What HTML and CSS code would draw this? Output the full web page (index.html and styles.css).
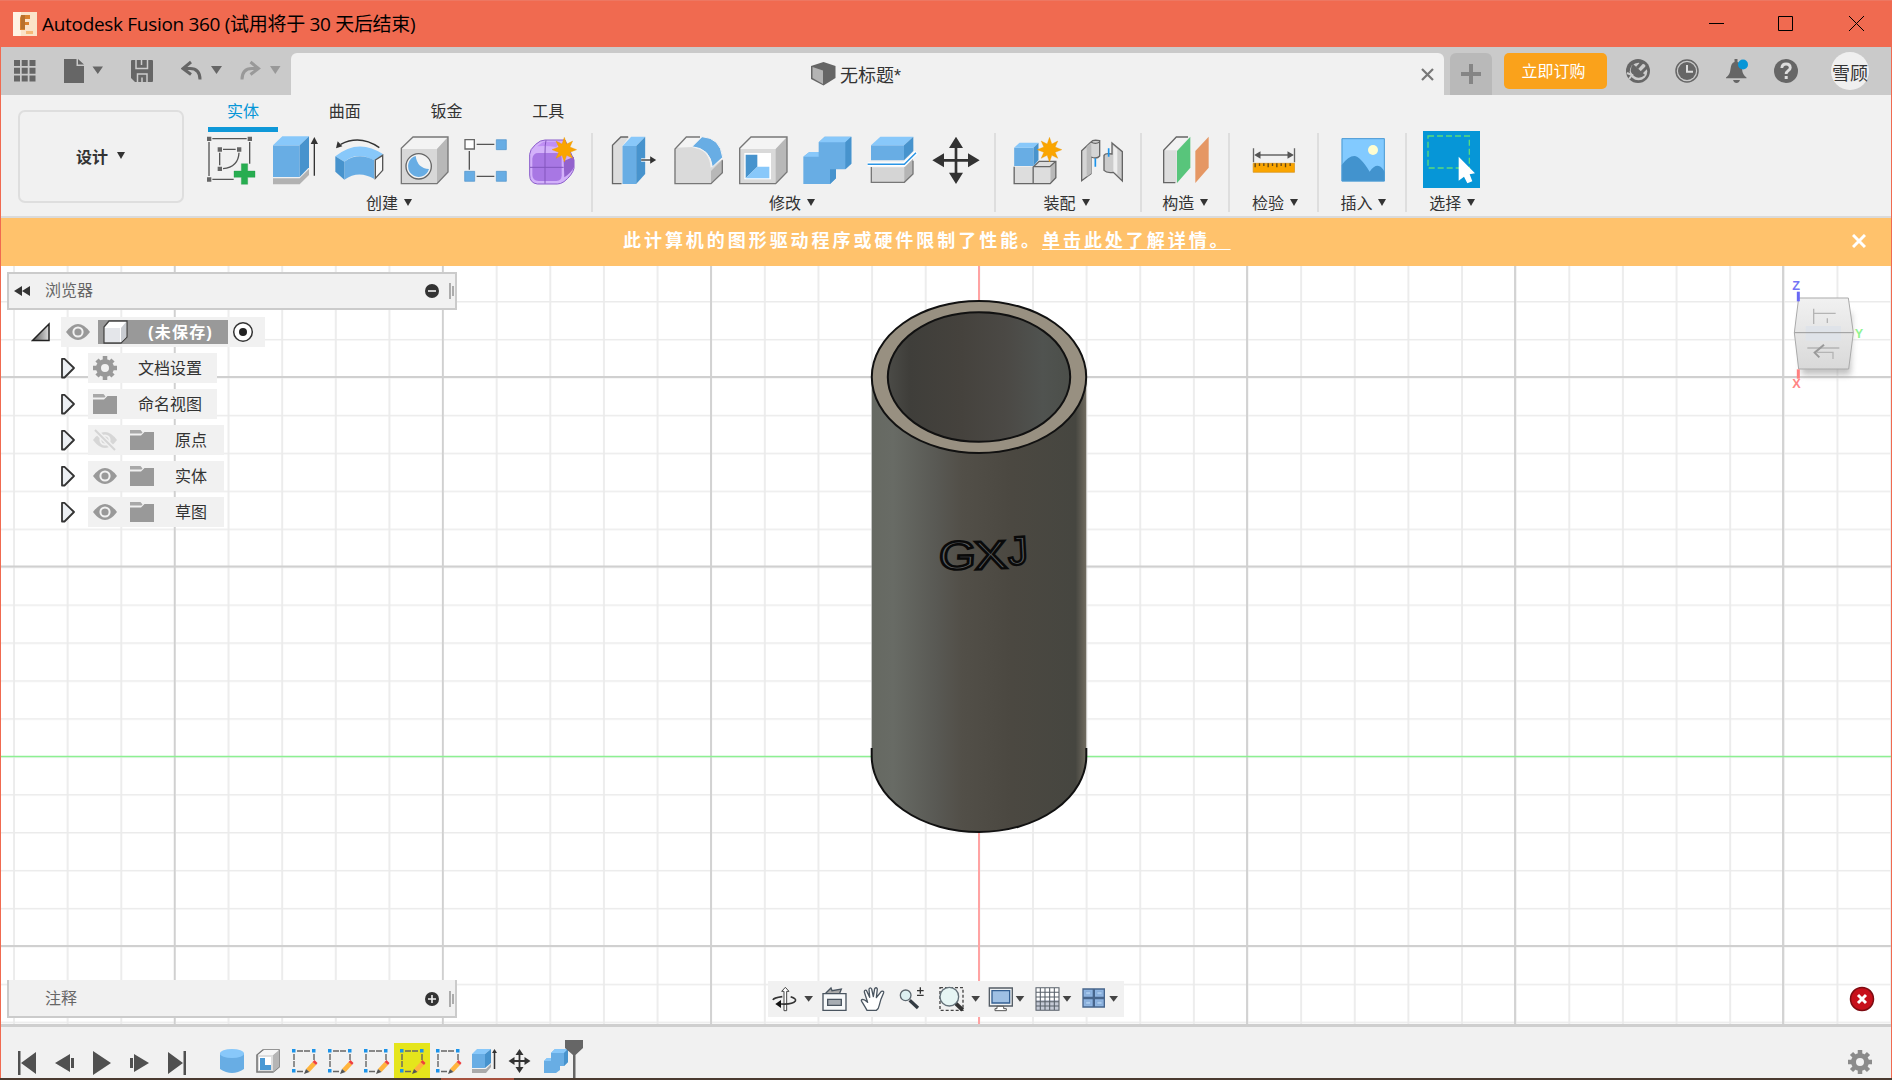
FILE: index.html
```html
<!DOCTYPE html>
<html lang="zh-CN">
<head>
<meta charset="utf-8">
<title>Autodesk Fusion 360</title>
<link rel="stylesheet" href="styles.css">
</head>
<body>
<svg class="defs" width="0" height="0">
  <defs>
    <linearGradient id="tri" x1="0" x2="1"><stop offset="0" stop-color="#555"/><stop offset="1" stop-color="#ddd"/></linearGradient>
    <symbol id="eye" viewBox="0 0 24 24"><path d="M0 12Q12-4 24 12Q12 28 0 12Z" fill="#999"/><circle cx="12" cy="12" r="4.600" fill="none" stroke="#f1f1f1" stroke-width="2"/></symbol>
    <symbol id="folder" viewBox="0 0 24 24"><path d="M0 4.500V2h10.500l2 2.500-1 1H0Z" fill="#a8a8a8"/><path d="M0 22V7.500h11l3.500-3.500H24v18Z" fill="#999"/></symbol>
    <symbol id="expand" viewBox="0 0 16 24"><path d="M2 2.800H4.500L14 12 4.500 21.500H2Z" fill="#eceff3" stroke="#333" stroke-width="1.800" stroke-linejoin="round"/></symbol>
    <symbol id="star" viewBox="-38 -38 76 76"><path d="M0-37 7-17 25-26 17-8 37 0 17 8 25 26 7 17 0 37-7 17-25 26-17 8-37 0-17-8-25-26-7-17Z" fill="#faa500" stroke="#eb9500"/></symbol>
    <symbol id="sk" viewBox="0 0 36 36"><g stroke="#666" stroke-width="1.400" fill="none"><path d="M11 8h13M8 11v14M11 28.500h6M28 11v7" stroke-dasharray="6 1"/></g><path d="M6 6h3.500v3.500H6zM26 6h3.500v3.500H26zM6 26h3.500v3.500H6z" fill="#1b93ea"/><path d="M20 26 26.500 19 30 22 23.500 29Z" fill="#ffb43d"/><path d="M26.500 19 28.500 17 31.500 20 30 22Z" fill="#ee3e3e"/><path d="M20 26 23.500 29 18 31Z" fill="#555"/></symbol>
  </defs>
</svg>
<div class="app">
  <header class="titlebar">
    <svg class="logo" width="24" height="24"><rect width="24" height="24" fill="#fbe3c9"/><path d="M0 0h8v24H0Z" fill="#fff3e4"/><path d="M8 3h9v4h-5v3h4v3h-4v5H7V6Z" fill="#d9812c"/><path d="M8 3h4v14H8z" fill="#b8712c"/><path d="M13 19h7v3h-7z" fill="#f6b877"/></svg>
    <span class="apptitle">Autodesk Fusion 360 (试用将于 30 天后结束)</span>
    <svg class="winbtns" width="155" height="15" fill="none" stroke="#000"><path d="M0 7.500h15M69.500.5h14v14h-14zM140 0l15 15M155 0l-15 15"/></svg>
  </header>

  <div class="tabstrip">
    <div class="quick">
      <svg width="22" height="22" fill="#666"><path d="M0 0h6v6H0zM7.700 0h6v6h-6zM15.500 0h6v6h-6zM0 7.700h6v6H0zM7.700 7.700h6v6h-6zM15.500 7.700h6v6h-6zM0 15.500h6v6H0zM7.700 15.500h6v6h-6zM15.500 15.500h6v6h-6z"/></svg>
      <svg class="q-file" width="40" height="24" fill="#666"><path d="M0 0h12.500v7H20v17H0zM14 0l6 5.500h-6zM28.500 7.500h10.500l-5.200 7.500z"/></svg>
      <svg class="q-save" width="22" height="22"><path d="M1 0h20q1 0 1 1v20q0 1-1 1H4L0 18V1Q0 0 1 0Z" fill="#666"/><path d="M5 0v8.500h11.500V0M10.500 0v5M6.500 22v-8h9.500v8M11 22v-4.500" fill="none" stroke="#ccc" stroke-width="1.500"/></svg>
      <svg class="q-undo" width="42" height="22"><path d="M10 2 2 8.500l8 6M3 8.500h6q10 0 10 11" fill="none" stroke="#666" stroke-width="3"/><path d="M30 6h11l-5.500 8z" fill="#666"/></svg>
      <svg class="q-redo" width="42" height="22"><path d="M10.500 2l8 6.500-8 6M18 8.500h-6Q2 8.500 2 19.500" fill="none" stroke="#999" stroke-width="3"/><path d="M30 6h10.500l-5.200 8z" fill="#999"/></svg>
    </div>
    <div class="doctab">
      <svg width="25" height="24"><path d="M0 4 12.500 0 24.500 4V16L12.500 23.500 0 17Z" fill="#666"/><path d="M1.500 5 12 8.500V22L1.500 16Z" fill="#b4b4b4"/></svg>
      <span>无标题*</span>
      <svg class="close" width="13" height="13"><path d="M1 1l11 11M12 1L1 12" stroke="#777" stroke-width="2.200"/></svg>
    </div>
    <div class="newtab"><svg width="20" height="20"><path d="M10 0v20M0 10h20" stroke="#858585" stroke-width="4"/></svg></div>
    <button class="order">立即订购</button>
    <div class="account">
      <svg width="24" height="24"><circle cx="12" cy="12" r="12" fill="#666"/><circle cx="12.500" cy="12.500" r="8.800" fill="#ccc"/><path d="M7 5 19 16Q13 21 8 17 2 12 7 5Z" fill="#666"/><path d="M11 9l5.500-6M15.500 13.500l6-6" stroke="#666" stroke-width="3"/><path d="M14.500 10l4-4.500M1 14l5 2-3 4" fill="none" stroke="#ccc" stroke-width="2"/></svg>
      <svg width="24" height="24"><circle cx="12" cy="12" r="11" fill="none" stroke="#666" stroke-width="1.500"/><circle cx="12" cy="12" r="9" fill="#666"/><path d="M12 6v6.700h6" fill="none" stroke="#ddd" stroke-width="2"/></svg>
      <svg width="24" height="24"><path d="M1 18.500Q5 16 5.500 10 6 4 9.500 3V0h3v3q4 1 4.500 7 .5 6 4.500 8.500v.8H1zM8 21h7q-1 3-3.500 3T8 21Z" fill="#666"/><circle cx="18" cy="5.500" r="5" fill="#0696d7"/></svg>
      <svg width="24" height="24"><circle cx="12" cy="12" r="12" fill="#666"/><path d="M7.800 9q.3-4 4.300-4t4.200 3.700c0 3-4.200 3-4.200 6.300" fill="none" stroke="#ddd" stroke-width="2.800"/><path d="M10.700 17h3v3h-3z" fill="#ddd"/></svg>
      <span class="avatar">雪顾</span>
    </div>
  </div>

  <div class="ribbon">
    <div class="workspace">设计<i class="caret"></i></div>
    <nav class="modes"><span class="on">实体</span><span>曲面</span><span>钣金</span><span>工具</span></nav>
    <div class="groups">
      <section class="group g-create"><div class="icons">
        <svg viewBox="38 126 162 162"><path d="M66 143h103M56 153v102M66 265h64M178 153v65M98 175h38M88 185v38M146 185Q144 228 98 233" fill="none" stroke="#555" stroke-width="4"/><path d="M50 137h13v13H50zM172 137h13v13h-13zM50 259h13v13H50zM82 169h13v13H82zM140 169h13v13h-13zM82 227h13v13H82z" fill="#666"/><path d="M153 218h19v22h22v19h-22v21h-19v-21h-22v-19h22z" fill="#27ad50" stroke="#219445"/></svg>
        <svg viewBox="232 126 162 162"><path d="M247 262h80l28-28v18l-28 28h-80z" fill="#b2b2b2"/><path d="M247 163h80v95h-80z" fill="#68ade4"/><path d="M247 163l28-27h80l-28 27z" fill="#88c8fa"/><path d="M327 163l28-27v93l-28 29z" fill="#4793cd"/><path d="M371 254v-96" stroke="#333" stroke-width="4"/><path d="M360 159l11-21 11 21z" fill="#333"/></svg>
        <svg viewBox="426 126 162 162"><path d="M568 170Q510 130 452 160" fill="none" stroke="#333" stroke-width="4"/><path d="M438 172l5-21 14 15z" fill="#333"/><path d="M436 196Q505 140 580 190L553 208Q500 180 463 212Z" fill="#88c8fa"/><path d="M463 212Q505 182 553 208V264Q506 236 463 266Z" fill="#68ade4"/><path d="M436 196l27 16v54l-27-24z" fill="#4793cd"/><path d="M556 207l22-14v45l-22 24z" fill="#f8f8f8" stroke="#555" stroke-width="4"/></svg>
        <svg viewBox="619 126 162 162"><path d="M632 174l35-36h105v105l-33 35H632z" fill="#d8d8d8"/><path d="M632 174l35-36h105l-33 36z" fill="#f3f3f3"/><path d="M739 174l33-36v105l-33 35z" fill="#b8b8b8"/><path d="M632 172l35-34h105v105l-33 35H632z" fill="none" stroke="#777" stroke-width="4"/><circle cx="684" cy="226" r="38" fill="#f3f3f3" stroke="#666" stroke-width="4"/><path d="M675 195Q680 232 715 234A32 32 0 1 1 675 195Z" fill="#68ade4"/></svg>
        <svg viewBox="813 126 162 162"><path d="M838 180v56M860 160h53M860 256h53" stroke="#555" stroke-width="4"/><path d="M825 146h28v28h-28z" fill="#fff" stroke="#666" stroke-width="4"/><path d="M919 146h30v30h-30zM824 241h30v30h-30zM919 241h30v30h-30z" fill="#68ade4" stroke="#4d92ca" stroke-width="2"/></svg>
        <svg viewBox="1007 126 162 162"><path d="M1018 190q0-14 18-30 14-13 28-13h60l27 60v25q-5 20-30 40-10 7-20 7h-60q-23-3-23-27Z" fill="#d3b1fa" stroke="#8b5dcb" stroke-width="3"/><path d="M1040 166l20-14h50l-12 16q-30-4-58-2Z" fill="#c08ff5"/><path d="M1120 210l31-13v30q-5 15-29 32z" fill="#9362cd"/><path d="M1026 203q2-17 18-17h53q17 0 17 17v50q0 17-16 17h-53q-19-1-19-18Z" fill="#a877e4"/><path d="M1019 229h101M1067 148q-3 10-3 38v92" stroke="#8356bd" stroke-width="3" fill="none"/><use href="#star" x="1084" y="138" width="76" height="76"/></svg>
      </div><p>创建<i class="caret"></i></p></section>
      <section class="group g-modify"><div class="icons">
        <svg viewBox="49.5 36 162 162"><path d="M66 73l25-25h24L96 74v114H66z" fill="#ddd"/><path d="M93 188H66V73l25-25h22" fill="none" stroke="#666" stroke-width="4"/><path d="M96 75h41v114H96z" fill="#68ade4"/><path d="M96 75l26-28h42l-27 28z" fill="#88c8fa"/><path d="M137 75l27-28v112l-27 30z" fill="#4793cd"/><path d="M152 117h27" stroke="#fff" stroke-width="10"/><path d="M152 117h30" stroke="#333" stroke-width="4"/><path d="M179 106l18 11-18 11z" fill="#333"/></svg>
        <svg viewBox="243 36 162 162"><path d="M254 84l35-36h50L310 80q48 5 52 60l36-25v40l-34 33H254Z" fill="#dadada"/><path d="M256 80l33-32h48L308 78Z" fill="#f4f4f4"/><path d="M363 150l35-35v40l-35 32Z" fill="#b8b8b8"/><path d="M330 48H289L255 84V188H363L397 155V118" fill="none" stroke="#777" stroke-width="4"/><path d="M306 77l30-30q55 3 62 62L367 138q-6-56-61-61Z" fill="#68ade4" stroke="#f3f3f3" stroke-width="3"/></svg>
        <svg viewBox="437 36 162 162"><path d="M448 84l34-36h108v105l-34 35H448Z" fill="#d9d9d9"/><path d="M448 84l34-36h108l-34 36Z" fill="#f4f4f4"/><path d="M556 84l34-36v105l-34 35Z" fill="#b8b8b8"/><path d="M448 82l34-34h108v105l-34 35H448Z" fill="none" stroke="#777" stroke-width="4"/><path d="M462 96h80v79h-80z" fill="#fff"/><path d="M466 101h35v36l-35 35z" fill="#4793cd"/><path d="M466 172l35-35h36v35z" fill="#88c8fa"/></svg>
        <svg viewBox="631 36 162 162"><path d="M687 64l18-17h80v81l-18 17h-28v27l-18 17h-80v-82l18-14h28z" fill="#68ade4"/><path d="M687 64l18-17h80l-18 17zM641 107l18-14h28v14z" fill="#88c8fa"/><path d="M767 64l18-17v81l-18 17zM721 145h18v27l-18 17z" fill="#4793cd"/></svg>
        <svg viewBox="825 36 162 162"><path d="M844 139h99l26-28v48l-26 25h-99z" fill="#d5d5d5"/><path d="M943 139l26-28v48l-26 25z" fill="#b5b5b5"/><path d="M844 138v46h99l26-25v-40" fill="none" stroke="#777" stroke-width="4"/><path d="M833 130h110l36-36" fill="none" stroke="#fff" stroke-width="13"/><path d="M843 73h99v45h-99z" fill="#68ade4"/><path d="M843 73l28-26h99l-28 26z" fill="#88c8fa"/><path d="M942 73l28-26v43l-28 28z" fill="#4793cd"/><path d="M833 130h110l35-35" fill="none" stroke="#2a95e5" stroke-width="4.500"/></svg>
        <svg viewBox="1018 36 162 162"><path d="M1099 70v96M1050 118h98" stroke="#333" stroke-width="8"/><path d="M1099 47l21 34h-42zM1099 189l21-34h-42zM1028 118l35-21v42zM1170 118l-35-21v42z" fill="#333"/></svg>
      </div><p>修改<i class="caret"></i></p></section>
      <section class="group g-assemble"><div class="icons">
        <svg viewBox="58.5 36 162 162"><path d="M71 137h57l16-17h52v50l-17 18H71z" fill="#ddd"/><path d="M180 137l16-17v50l-16 18z" fill="#b8b8b8"/><path d="M71 137v51h108l17-18v-49h-50l-18 17v50M128 137h50l18-16" fill="none" stroke="#666" stroke-width="4"/><path d="M71 80h58v55H71z" fill="#68ade4"/><path d="M71 80l16-15h57l-15 15z" fill="#88c8fa"/><path d="M129 80l15-15v52l-15 18z" fill="#4793cd"/><use href="#star" x="139" y="48" width="76" height="76"/></svg>
        <svg viewBox="252 36 162 162"><path d="M275 89l28-26q5-8 26-4v46q-8 10-26 3v50l-28 21z" fill="#d5d5d5" stroke="#666" stroke-width="4"/><path d="M290 76l14-12v93l-14 11z" fill="#bbb"/><path d="M303 63q13 8 26 0" fill="none" stroke="#666" stroke-width="4"/><path d="M366 66l31 26v88l-27-26q-20 3-28-6v-45q4-8 24-4Z" fill="#ccc" stroke="#666" stroke-width="4"/><path d="M370 74l12 11v75l-12-9z" fill="#eee"/><path d="M316 112v25M356 82v25" stroke="#1b93ea" stroke-width="5"/></svg>
      </div><p>装配<i class="caret"></i></p></section>
      <section class="group g-construct"><div class="icons">
        <svg viewBox="507 36 162 162"><path d="M521 88l38-40h39l-38 40v97h-39z" fill="#ddd"/><path d="M521 88l38-40h39l-37 40z" fill="#f2f2f2"/><path d="M556 185h-35V88l38-40h35" fill="none" stroke="#666" stroke-width="4"/><path d="M561 90l40-43v93l-40 46z" fill="#58c57b"/><path d="M616 90l40-43v93l-40 46z" fill="#e59764"/></svg>
      </div><p>构造<i class="caret"></i></p></section>
      <section class="group g-inspect"><div class="icons">
        <svg viewBox="772.5 36 162 162"><path d="M792 82v42M915 82v42M800 102h108" stroke="#666" stroke-width="4"/><path d="M794 102l19-11v22zM913 102l-19-11v22z" fill="#555"/><path d="M791 127h124v27H791z" fill="#faa500" stroke="#d59118" stroke-width="2"/><path d="M797 127v12M810 127v8M823 127v8M836 127v12M849 127v8M862 127v12M875 127v8M888 127v12M902 127v8" stroke="#614617" stroke-width="4"/></svg>
      </div><p>检验<i class="caret"></i></p></section>
      <section class="group g-insert"><div class="icons">
        <svg viewBox="1035 36 162 162"><path d="M1052 52h129v129h-129z" fill="#82caff"/><path d="M1052 132q20-27 38-27 17 0 46 47 14-20 27-17 9 2 18 18v28h-129z" fill="#4293ce"/><circle cx="1146" cy="87" r="15" fill="#fffdd0"/><path d="M1053 53h127v127h-127z" fill="none" stroke="#4c9ad2" stroke-width="3"/></svg>
      </div><p>插入<i class="caret"></i></p></section>
      <section class="group g-select"><div class="icons">
        <svg class="sel" viewBox="1299 33 171 171"><path d="M1299 33h171v171h-171z" fill="#0696d7"/><path d="M1314 48h124v96h-124z" fill="none" stroke="#5adb7c" stroke-width="4" stroke-dasharray="18 9"/><path d="M1406 110v72l16-12 10 20 15-6-8-21 16-3Z" fill="#fff"/></svg>
      </div><p>选择<i class="caret"></i></p></section>
    </div>
  </div>

  <div class="banner"><span>此计算机的图形驱动程序或硬件限制了性能。<a>单击此处了解详情。</a></span>
    <svg class="bclose" width="14" height="14"><path d="M1 1l12 12M13 1L1 13" stroke="#fff" stroke-width="3"/></svg></div>

  <main class="viewport">
    <svg class="scene" width="1892" height="758" viewBox="0 266 1892 758">
      <defs>
        <linearGradient id="body" x1="0" x2="1"><stop offset="0" stop-color="#666962"/><stop offset=".1" stop-color="#686b65"/><stop offset=".3" stop-color="#595954"/><stop offset=".42" stop-color="#524f48"/><stop offset=".65" stop-color="#4b4841"/><stop offset=".95" stop-color="#464640"/><stop offset="1" stop-color="#716c60"/></linearGradient>
        <linearGradient id="hole" x1="0" x2="1"><stop offset="0" stop-color="#4b4b47"/><stop offset=".12" stop-color="#3f3e3a"/><stop offset=".4" stop-color="#45423d"/><stop offset=".65" stop-color="#4b4945"/><stop offset=".85" stop-color="#505350"/><stop offset="1" stop-color="#4c4f4a"/></linearGradient>
        <linearGradient id="face" x1="0" y1="0" x2="0" y2="1"><stop offset="0" stop-color="#f1f1f1"/><stop offset="1" stop-color="#d9d9d9"/></linearGradient>
        <filter id="soft" x="-30%" y="-30%" width="160%" height="160%"><feGaussianBlur stdDeviation="10"/></filter>
        <pattern id="minor" width="53.630" height="37.930" patternUnits="userSpaceOnUse" x="13" y="301"><path d="M1 0V38M0 .5H54" stroke="#ebebeb" stroke-width="1.800"/></pattern>
      </defs>
      <path d="M0 266h1892v758H0z" fill="#fff"/>
      <path d="M0 266h1892v758H0z" fill="url(#minor)"/>
      <path d="M174.700 266v758M442.800 266v758M711 266v758M1247 266v758M1515 266v758M1783 266v758M0 377h1892M0 566.500h1892M0 946h1892" stroke="#d0d0d0" stroke-width="1.800"/>
      <path d="M979 266v758" stroke="#ffa3a3" stroke-width="2"/>
      <path d="M0 756.500h1892" stroke="#8cf092" stroke-width="1.500"/>
      <path d="M871.700 377V756A107.300 76 0 0 0 1086.300 756V377Z" fill="url(#body)"/>
      <path d="M871.700 748V756A107.300 76 0 0 0 1086.300 756V748" fill="none" stroke="#111" stroke-width="2"/>
      <ellipse cx="979" cy="377" rx="107.200" ry="76" fill="#989081" stroke="#111" stroke-width="2"/>
      <ellipse cx="979" cy="377" rx="91.200" ry="64.800" fill="url(#hole)" stroke="#111" stroke-width="2"/>
      <g class="engrave"><text transform="translate(938 569.500) scale(1.200 1) rotate(-1) skewX(-4)">G</text><text transform="translate(975 569.500) scale(1.230 1) rotate(-3)">X</text><text transform="translate(1008.500 565) rotate(-3)">J</text></g>
      <g transform="translate(1740 260) scale(.33333)">
        <path d="M180 160H335L332 345H185Z" fill="#999" opacity=".6" filter="url(#soft)"/>
        <path d="M176 114H325L340 218 326 327H176L163 218Z" fill="url(#face)" stroke="#aaa" stroke-width="3"/>
        <path d="M197 198h106v44H197z" fill="#dfe3e9"/>
        <path d="M163 218H340" stroke="#999" stroke-width="3"/>
        <path d="M221 146v46M221 160h66M262 175v14M202 264h96M230 277h49v20" fill="none" stroke="#b4b4b4" stroke-width="4"/><path d="M252 254l-28 24 14 14" fill="none" stroke="#999" stroke-width="6"/>
        <path d="M175 95v29" stroke="#6969f5" stroke-width="9"/><path d="M175 328v28" stroke="#ff8080" stroke-width="9"/>
        <g class="axis"><text x="157" y="91" fill="#7474f5">Z</text><text x="344" y="235" fill="#91f391">Y</text><text x="157" y="383" fill="#ff8585">X</text></g>
      </g>
    </svg>

    <aside class="browser">
      <div class="phead"><svg width="16" height="10"><path d="M8 0v10L0 5zM16 0v10L8 5z" fill="#333"/></svg><span>浏览器</span>
        <svg class="pbtn" width="30" height="18"><circle cx="7" cy="9" r="7" fill="#333"/><path d="M3 9h8" stroke="#f1f1f1" stroke-width="1.600"/><path d="M25 1v16M28 4v10" stroke="#888" stroke-width="1.300"/></svg></div>
      <div class="row root"><svg width="20" height="20"><path d="M1.500 18.500 18 2v16.500Z" fill="url(#tri)" stroke="#222" stroke-width="1.500"/></svg>
        <div class="cell"><svg width="24" height="24"><use href="#eye"/></svg>
          <div class="name"><svg width="26" height="24"><path d="M1 7 6 1H24V17L18 23H1Z" fill="#fff" stroke="#444" stroke-width="1.300"/><path d="M2 8h15v14H2z" fill="#e4e6ea"/><path d="M18 8l5-6v15l-5 5z" fill="#c9ccd1"/></svg><b>(未保存)</b></div>
          <svg width="22" height="22"><circle cx="11" cy="11" r="9.300" fill="#fff" stroke="#333" stroke-width="1.500"/><circle cx="11" cy="11" r="4" fill="#222"/></svg></div></div>
      <div class="row"><svg width="16" height="24"><use href="#expand"/></svg><div class="cell wide"><svg width="24" height="24" viewBox="-12 -12 24 24"><path d="M0-12V12M-12 0H12M-8-8 8 8M8-8-8 8" stroke="#999" stroke-width="4.500"/><circle r="6.500" fill="#f1f1f1" stroke="#999" stroke-width="5"/></svg><span>文档设置</span></div></div>
      <div class="row"><svg width="16" height="24"><use href="#expand"/></svg><div class="cell wide"><svg width="24" height="24"><use href="#folder"/></svg><span>命名视图</span></div></div>
      <div class="row"><svg width="16" height="24"><use href="#expand"/></svg><div class="cell"><svg width="24" height="24"><g opacity=".3"><use href="#eye"/></g><path d="M3 3 21 21" stroke="#f1f1f1" stroke-width="5"/><path d="M2 2 22 22" stroke="#d5d5d5" stroke-width="2"/></svg><svg width="24" height="24"><use href="#folder"/></svg><span>原点</span></div></div>
      <div class="row"><svg width="16" height="24"><use href="#expand"/></svg><div class="cell"><svg width="24" height="24"><use href="#eye"/></svg><svg width="24" height="24"><use href="#folder"/></svg><span>实体</span></div></div>
      <div class="row"><svg width="16" height="24"><use href="#expand"/></svg><div class="cell"><svg width="24" height="24"><use href="#eye"/></svg><svg width="24" height="24"><use href="#folder"/></svg><span>草图</span></div></div>
    </aside>

    <div class="dock">
      <div class="comments"><span>注释</span><svg class="pbtn" width="30" height="18"><circle cx="7" cy="9" r="7" fill="#333"/><path d="M3 9h8M7 5v8" stroke="#f1f1f1" stroke-width="1.600"/><path d="M25 1v16M28 4v10" stroke="#888" stroke-width="1.300"/></svg></div>
      <div class="navbar">
        <svg width="48.670" height="36" viewBox="54 63 146 108"><path d="M102 94v58h8V94h7l-11-12-11 12z" fill="#fff" stroke="#444" stroke-width="3"/><path d="M122 110q18 6 14 13-8 11-43 9M97 110q-26 3-28 10" fill="none" stroke="#333" stroke-width="5"/><path d="M76 132l17-12v24z" fill="#111"/><path d="M163 108h26l-13 17z" fill="#444"/></svg>
        <svg width="36.670" height="36" viewBox="200 63 110 108"><path d="M226 100l16-16 3 8 28-5-5 13" fill="#aaa" stroke="#4a5560" stroke-width="4"/><path d="M218 101h69v50h-69z" fill="#f7f9fa" stroke="#4a5560" stroke-width="4"/><path d="M232 118h41v18h-41z" fill="#a7adb3" stroke="#4a5560" stroke-width="4"/></svg>
        <svg width="40" height="36" viewBox="310 63 120 108"><path d="M352 151Q341 131 336 124q-3-5 3-6 6 0 15 9L344 96q0-7 6-5l10 21-2-25q4-7 8 0l5 23 4-24q5-6 8 1l-3 26 15-19q8-2 7 4-10 21-13 37-2 12-9 16Z" fill="#fff" stroke="#4a5560" stroke-width="4" stroke-linejoin="round"/></svg>
        <svg width="38.330" height="36" viewBox="430 63 115 108"><path d="M480 121l25 23" stroke="#333b42" stroke-width="10"/><circle cx="468" cy="106" r="16" fill="#dcf0f2" stroke="#5d6870" stroke-width="4"/><path d="M502 92h20M512 82v19M502 106h20" stroke="#333" stroke-width="4"/></svg>
        <svg width="51.670" height="36" viewBox="545 63 155 108"><path d="M569 83h69v68h-69z" fill="none" stroke="#444" stroke-width="4" stroke-dasharray="9 6"/><path d="M616 130l21 20" stroke="#333" stroke-width="12"/><circle cx="597" cy="110" r="28" fill="#e6f5f4" stroke="#65727a" stroke-width="4"/><path d="M663 108h26l-13 17z" fill="#444"/></svg>
        <svg width="46.670" height="36" viewBox="700 63 140 108"><path d="M719 84h69v54h-69z" fill="#edf0f2" stroke="#555e67" stroke-width="4"/><path d="M727 92h53v37h-53z" fill="#9fc0e4" stroke="#345f92" stroke-width="4"/><path d="M742 139h20v7h8v6h-34v-6h6z" fill="#fff" stroke="#555" stroke-width="3"/><path d="M798 108h26l-13 17z" fill="#444"/></svg>
        <svg width="46.670" height="36" viewBox="840 63 140 108"><path d="M858 83h69v68h-69z" fill="#fff"/><path d="M858 120h69v31h-69z" fill="#c5cad6"/><path d="M858 83h69v68h-69zM871 83v68M885 83v68M899 83v68M913 83v68M858 97h69M858 111h69M858 125h69M858 138h69" fill="none" stroke="#586069" stroke-width="3.200"/><path d="M938 108h26l-13 17z" fill="#444"/></svg>
        <svg width="47.330" height="36" viewBox="980 63 142 108"><path d="M998 87h31v25h-31zM1032 87h30v25h-30zM998 116h31v25h-31zM1032 116h30v25h-30z" fill="#8fb5e2" stroke="#47658c" stroke-width="4"/><path d="M1006 95h15v9h-15zM1040 95h15v9h-15zM1006 124h15v9h-15zM1040 124h15v9h-15z" fill="#aacbef" stroke="#7fa5d2" stroke-width="2"/><path d="M1077 108h26l-13 17z" fill="#444"/></svg>
      </div>
      <svg class="error" width="26" height="26"><circle cx="13" cy="13" r="11.500" fill="#c7101b" stroke="#7d0b12" stroke-width="1.500"/><path d="M9 9l8 8M17 9l-8 8" stroke="#fff" stroke-width="3"/></svg>
    </div>
  </main>

  <footer class="timeline">
    <svg class="player" width="170" height="24" fill="#505050"><path d="M1 0h2.500v24H1zM19 1v22L4 12zM53 3v18l-15-9zM54 7h3v10h-3zM76 0v24l18-12zM113 7h3v10h-3zM117 3v18l15-9zM151 1v22l15-11zM166.500 0h2.500v24h-2.500z"/></svg>
    <div class="features">
      <svg viewBox="0 0 36 36"><path d="M6 10v16q12 8 24 0V10Z" fill="#68ade4"/><ellipse cx="18" cy="10.500" rx="12" ry="4.500" fill="#88c8fa"/></svg>
      <svg viewBox="0 0 36 36"><path d="M7 12l6-5h16v17l-6 5H7z" fill="#ddd" stroke="#777" stroke-width="1.600"/><path d="M23 12l6-5v17l-6 5z" fill="#b5b5b5"/><path d="M8 12l6-5h15l-6 5z" fill="#f6f6f6"/><path d="M9 14h12v13H9z" fill="#fff"/><path d="M10 15h5v7h6v5H10z" fill="#4a99d4"/></svg>
      <svg><use href="#sk"/></svg><svg><use href="#sk"/></svg><svg><use href="#sk"/></svg><svg class="hot"><use href="#sk"/></svg><svg><use href="#sk"/></svg>
      <svg viewBox="0 0 36 36"><path d="M6 26h14l5-5v3l-5 6H6z" fill="#aaa"/><path d="M6 11h13v14H6z" fill="#68ade4"/><path d="M6 11l5-5h14l-6 5z" fill="#88c8fa"/><path d="M19 11l6-5v14l-6 5z" fill="#4793cd"/><path d="M28.500 26V9" stroke="#333" stroke-width="1.500"/><path d="M26 10l2.500-4 2.500 4z" fill="#333"/></svg>
      <svg viewBox="0 0 36 36"><path d="M17.500 10v17M10 18h16" stroke="#333" stroke-width="1.800"/><path d="M17.500 6l4 6h-8zM17.500 30l4-6h-8zM6.500 18l6-4v8zM28.500 18l-6-4v8z" fill="#333"/></svg>
      <svg viewBox="0 0 36 36"><path d="M13 10l4-4h13v13l-4 4h-4v4l-4 3H6V18l3-3h4z" fill="#68ade4"/><path d="M13 10l4-4h13l-4 4zM6 18l3-3h4v3z" fill="#88c8fa"/><path d="M26 10l4-4v13l-4 4z" fill="#4793cd"/></svg>
    </div>
    <svg class="marker" width="18" height="38"><path d="M0 0h18v8l-7.500 7V38H8V15L0 8Z" fill="#666"/></svg>
    <svg class="settings" width="26" height="26" viewBox="-13 -13 26 26"><path d="M0-12V12M-12 0H12M-8.500-8.500 8.500 8.500M8.500-8.500-8.500 8.500" stroke="#8b8b8b" stroke-width="4.500"/><circle r="6.500" fill="#f1f1f1" stroke="#8b8b8b" stroke-width="5"/></svg>
  </footer>
  <div class="desk"></div>
</div>
</body>
</html>
```
FILE: styles.css
```css
* { box-sizing: border-box; }
body { margin: 0; font-family: "Liberation Sans", "Noto Sans CJK SC", sans-serif; color: #333; }
svg { display: block; flex: none; }
p { margin: 0; }
.defs { position: absolute; }
.app { width: 1892px; height: 1080px; display: flex; flex-direction: column; overflow: hidden; background: #f1f1f1; box-shadow: inset 1px 0 #f06a50, inset -1px 0 #f06a50; }

.titlebar { height: 47px; flex: none; display: flex; align-items: center; padding: 0 22px 1px 13px; background: #f06a50; border-top: 1px solid #ed7762; color: #000; }
.apptitle { margin-left: 5px; font: 19px/40px "Open Sans", "Noto Sans CJK SC", sans-serif; letter-spacing: -.31px; white-space: nowrap; font-weight: 400; }
.winbtns { margin-left: auto; margin-right: 6px; }

.tabstrip { height: 48px; flex: none; display: flex; background: #cacaca; margin: 0 1px; }
.quick { width: 290px; display: flex; padding: 13px 0 0 13px; }
.q-file { margin: -1px 0 0 28px; }
.q-save { margin-left: 27px; }
.q-undo { margin-left: 28px; }
.q-redo { margin-left: 17px; }
.doctab { width: 1153px; margin-top: 6px; border-radius: 6px 6px 0 0; background: #f1f1f1; display: flex; align-items: flex-start; padding: 9px 10px 0 520px; font-size: 18px; line-height: 28px; }
.doctab span { margin-left: 4px; }
.close { margin: 6px 0 0 auto; }
.newtab { width: 42px; margin: 6px 0 0 6px; border-radius: 6px 6px 0 0; background: #b9b9b9; display: flex; justify-content: center; align-items: center; }
.order { width: 103px; height: 36px; margin: 6px 0 0 12px; padding: 0 4px 2px 0; border: 0; border-radius: 5px; background: #faa21b; color: #fff; font: 16px/34px "Noto Sans CJK SC", sans-serif; }
.account { display: flex; align-items: flex-start; gap: 25.500px; padding: 12px 0 0 18.500px; }
.avatar { width: 38px; height: 38px; margin: -7px 0 0 7.500px; border-radius: 50%; background: #efefef; font: 18px/40px "Noto Sans CJK SC", sans-serif; text-align: center; white-space: nowrap; }

.ribbon { height: 123px; flex: none; margin: 0 1px; display: grid; grid-template-columns: 185px 1fr; grid-template-rows: 37px 86px; background: #f1f1f1; border-bottom: 2px solid #dadada; }
.workspace { grid-row: 1 / 3; width: 166px; height: 93px; margin: 15px 0 0 17px; border: 2px solid #dedede; border-radius: 7px; font: bold 16px/86px "Noto Sans CJK SC", sans-serif; display: flex; justify-content: center; align-items: center; padding: 0 1px 2px 0; }
.caret { display: inline-block; border: 4.500px solid transparent; border-top: 7px solid #333; border-bottom: 0; margin-left: 6px; vertical-align: 3px; }
.workspace .caret { margin-left: 9px; }
.modes { display: flex; padding-left: 6px; font-size: 16px; line-height: 34px; }
.modes span { width: 101.800px; text-align: center; }
.modes .on { color: #0696d7; background: linear-gradient(#0f98d8, #0f98d8) 50% 100% / 70px 5px no-repeat; }
.groups { display: flex; }
.group { display: flex; flex-direction: column; align-items: center; border-right: 2px solid #dedede; height: 79px; margin-top: 1px; }
.group:last-child { border: 0; }
.icons { display: flex; height: 54px; margin: 0 -1px 0 1px; }
.icons svg { width: 54px; height: 54px; margin: -.5px 5.300px 0; }
.icons .sel { width: 57px; height: 57px; margin: -2px 0 0; }
.group p { font-size: 16px; line-height: 24px; margin-top: 5px; white-space: nowrap; }
.g-create { width: 407px; padding-left: 4px; }
.g-create p, .g-modify p, .g-assemble p { margin-right: 3px; }
.g-insert p, .g-inspect p { margin-left: 3px; }
.g-modify { width: 403px; }
.g-modify .icons { margin: 0 -1.500px 0 1.500px; }
.g-assemble { width: 146px; }
.g-construct, .g-inspect, .g-insert { width: 88.400px; }
.g-inspect .icons { margin: 0; }
.g-select { width: 90px; }
.g-select .icons { margin: 0 1px 0 -1px; }

.banner { height: 48px; flex: none; margin: 0 1px; background: #ffc26c; color: #fff; font: bold 18px/42px "Noto Sans CJK SC", sans-serif; display: flex; padding: 0 25px 0 622px; letter-spacing: 2.950px; white-space: nowrap; }
.banner a { text-decoration: underline; text-underline-offset: 2px; text-decoration-thickness: 1px; }
.bclose { margin: 16px 0 0 auto; }

.viewport { height: 758px; flex: none; margin: 0 1px; position: relative; display: flex; flex-direction: column; justify-content: space-between; overflow: hidden; }
.scene { position: absolute; left: -1px; top: 0; }
.engrave { font: 40px "Liberation Sans", sans-serif; fill: #5d6062; stroke: #0a0a0a; stroke-width: 2.400; }
.axis { font: bold 38px "Liberation Sans", sans-serif; }
.browser { position: relative; width: 450px; margin: 6px 0 0 6px; }
.phead { height: 38px; display: flex; align-items: center; background: #f1f1f1; border: 2px solid #cbcbcb; padding: 0 0 0 5px; font-size: 16px; line-height: 30px; color: #666; }
.phead span { margin-left: 15px; }
.pbtn { margin-left: auto; }
.row { height: 30px; margin-top: 6px; padding-left: 53px; display: flex; align-items: center; font-size: 16px; line-height: 30px; }
.row.root { padding-left: 24px; margin-top: 7px; }
.cell { display: flex; align-items: center; height: 30px; width: 136px; margin-left: 12px; padding-left: 4.500px; background: #f1f1f1; }
.cell.wide { width: 129px; }
.cell svg + svg { margin-left: 13px; }
.cell span { margin: 2px 0 0 21.500px; }
.root .cell { width: 204px; margin-left: 10px; }
.name { display: flex; align-items: center; width: 130px; height: 24px; margin: 0 4px 0 8.500px; padding-left: 5px; background: #999; color: #fff; line-height: 22px; }
.name b { margin: 1px 0 0 19px; letter-spacing: 1.300px; }

.dock { position: relative; height: 44px; display: flex; align-items: flex-start; }
.comments { width: 450px; height: 38px; margin-left: 6px; padding-top: 1px; display: flex; align-items: center; background: #f1f1f1; border: 2px solid #cbcbcb; border-top: 0; padding-left: 36px; font-size: 16px; line-height: 30px; color: #666; }
.navbar { display: flex; margin: 1px 0 0 311px; background: #f1f1f1; }
.error { margin: 6px 0 0 725px; }

.timeline { height: 54px; flex: none; margin: 0 1px; display: flex; background: #f1f1f1; border-top: 3px solid #cfcfcf; }
.player { margin: 23.500px 0 0 15.500px; }
.features { display: flex; margin: 16px 0 0 27.500px; }
.features svg { width: 36px; height: 36px; }
.hot { background: #e5e51c; }
.marker { margin: 13px 0 0 -9px; }
.settings { margin: 22px 18px 0 auto; }
.desk { height: 2px; background: linear-gradient(90deg, #4a3a30 441px, #a5523f 441px 514px, #4a3a30 514px); }
```
